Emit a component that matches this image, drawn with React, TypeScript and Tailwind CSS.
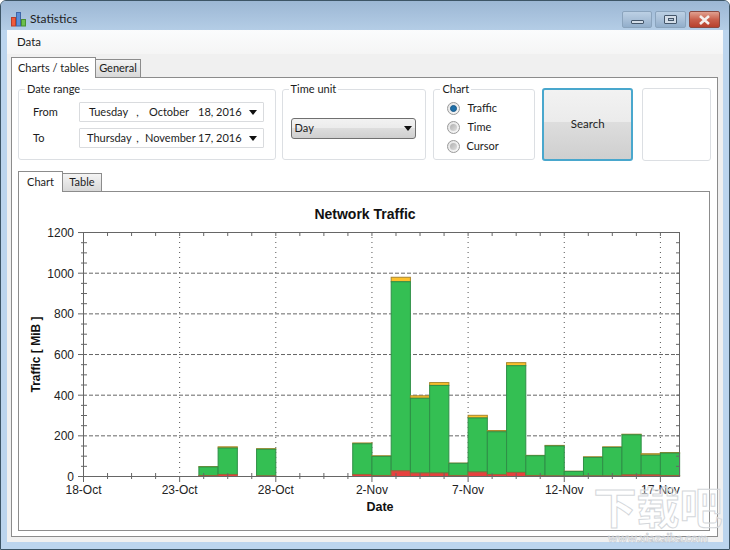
const uiFont = 'font-["Lato",sans-serif]';

// day offset from 18-Oct, red top, green top, yellow top (all in MB)
const bars: [number, number, number, number][] = [
  [6, 5, 47, 49],
  [7, 10, 140, 146],
  [9, 3, 134, 137],
  [14, 10, 161, 165],
  [15, 5, 99, 102],
  [16, 28, 958, 980],
  [17, 17, 385, 397],
  [18, 17, 448, 462],
  [19, 5, 65, 66],
  [20, 22, 288, 301],
  [21, 10, 220, 226],
  [22, 20, 545, 560],
  [23, 5, 102, 104],
  [24, 3, 150, 153],
  [25, 2, 25, 26],
  [26, 3, 94, 97],
  [27, 3, 143, 146],
  [28, 8, 205, 208],
  [29, 8, 105, 112],
  [30, 5, 115, 118],
];

const xLabels = ['18-Oct', '23-Oct', '28-Oct', '2-Nov', '7-Nov', '12-Nov', '17-Nov'];

const px = (day: number) => 83.5 + day * 19.23;
const py = (mb: number) => 476.5 - mb * 0.2033;

function TrafficChart() {
  const minorX = Array.from({ length: 25 }, (_, i) => px(i * 1.25));
  const minorY = Array.from({ length: 25 }, (_, i) => py(i * 50));
  return (
    <svg width="689" height="338" viewBox="19 192 689 338" className="block">
      <text x="365" y="219" textAnchor="middle" fontSize="14" fontWeight="700" fontFamily="Liberation Sans" fill="#111">
        Network Traffic
      </text>

      {[200, 400, 600, 800, 1000].map((v) => (
        <line key={v} x1="83" x2="680" y1={py(v)} y2={py(v)} stroke="#666" strokeDasharray="4 2" />
      ))}
      {[0, 5, 10, 15, 20, 25, 30].map((d) => (
        <line key={d} x1={px(d)} x2={px(d)} y1="232" y2="476" stroke="#555" strokeDasharray="1 4" />
      ))}

      {bars.map(([day, red, green, yellow]) => (
        <g key={day}>
          <rect x={px(day)} y={py(yellow)} width="19.23" height={py(green) - py(yellow)} fill="#fcc02c" stroke="#a8862c" />
          <rect x={px(day)} y={py(green)} width="19.23" height={py(red) - py(green)} fill="#34bf53" stroke="#2f8f47" />
          <rect x={px(day)} y={py(red)} width="19.23" height={py(0) - py(red)} fill="#e6413f" stroke="#96683a" />
        </g>
      ))}

      <rect x="83.5" y="232.5" width="596" height="244" fill="none" stroke="#666" />
      {minorY.map((y, i) => (
        <g key={i} stroke="#666">
          <line x1={i % 4 === 0 ? 78 : 81} x2={i % 4 === 0 ? 84 : 87} y1={y} y2={y} />
          <line x1="676" x2="680" y1={y} y2={y} />
        </g>
      ))}
      {minorX.map((x, i) => (
        <g key={i} stroke="#666">
          <line x1={x} x2={x} y1={i % 4 === 0 ? 476 : 473} y2={i % 4 === 0 ? 482 : 479} />
          <line x1={x} x2={x} y1="232" y2="236" />
        </g>
      ))}

      {[0, 200, 400, 600, 800, 1000, 1200].map((v) => (
        <text key={v} x="74" y={py(v) + 4.5} textAnchor="end" fontSize="12" fontFamily="Liberation Sans" fill="#222">
          {v}
        </text>
      ))}
      {xLabels.map((label, i) => (
        <text key={label} x={px(i * 5)} y="494" textAnchor="middle" fontSize="12" fontFamily="Liberation Sans" fill="#222">
          {label}
        </text>
      ))}
      <text x="380" y="511" textAnchor="middle" fontSize="12.5" fontWeight="700" fontFamily="Liberation Sans" fill="#111">
        Date
      </text>
      <text
        transform="translate(40 354.5) rotate(-90)"
        textAnchor="middle"
        fontSize="12"
        fontWeight="700"
        fontFamily="Liberation Sans"
        fill="#111"
      >
        Traffic [ MiB ]
      </text>
    </svg>
  );
}

function AppIcon() {
  return (
    <svg width="16" height="16" viewBox="0 0 16 16" className="block">
      <rect x="0.5" y="6.5" width="4" height="8.5" fill="#ef5a3c" stroke="#b8402c" />
      <rect x="5.5" y="1.5" width="4" height="13.5" fill="#5d8fd8" stroke="#3f67a8" />
      <rect x="10.5" y="8.5" width="4" height="6.5" fill="#6cc04c" stroke="#4a8f34" />
    </svg>
  );
}

function WindowButtons() {
  return (
    <div className="flex gap-[3px] pt-[10px] pr-[9px]">
      <div className="flex h-[17px] w-[30px] items-end justify-center rounded-[2px] border border-[#8ba4bd] bg-gradient-to-b from-[#bcd0e4] via-[#a9c0d8] to-[#92aecb] pb-[3px]">
        <div className="h-[4px] w-[13px] rounded-[1px] border border-[#44566a] bg-[#d3dde8]" />
      </div>
      <div className="flex h-[17px] w-[31px] items-center justify-center rounded-[2px] border border-[#8ba4bd] bg-gradient-to-b from-[#bcd0e4] via-[#a9c0d8] to-[#92aecb]">
        <div className="flex h-[9px] w-[13px] items-center justify-center rounded-[1px] border border-[#44566a] bg-[#d3dde8]">
          <div className="h-[3px] w-[6px] border border-[#44566a] bg-[#b8c9da]" />
        </div>
      </div>
      <div className="flex h-[17px] w-[31px] items-center justify-center rounded-[2px] border border-[#8a4a42] bg-gradient-to-b from-[#e0a090] via-[#c9604c] to-[#b8402c]">
        <svg width="13" height="10" viewBox="0 0 13 10">
          <path d="M2 1 L11 9 M11 1 L2 9" stroke="#f4f0ee" strokeWidth="2.6" />
        </svg>
      </div>
    </div>
  );
}

function Tab({ label, active, w }: { label: string; active?: boolean; w: string }) {
  if (active) {
    return (
      <div className={`relative z-10 -mb-px flex h-[21px] items-start border border-b-0 border-[#8c8c8c] bg-white pt-[2px] ${w}`}>
        <span className="w-full text-center">{label}</span>
      </div>
    );
  }
  return (
    <div className={`mt-[2px] flex h-[18px] items-center justify-center border border-l-0 border-b-0 border-[#8c8c8c] bg-gradient-to-b from-[#f4f4f4] to-[#d8d8d8] ${w}`}>
      {label}
    </div>
  );
}

function GroupBox({ title, className, children }: { title: string; className: string; children?: React.ReactNode }) {
  return (
    <fieldset className={`h-[78px] rounded-[3px] border border-[#dcdfe3] ${className}`}>
      <legend className="ml-[6px] px-[2px] leading-[14px]">{title}</legend>
      {children}
    </fieldset>
  );
}

function DateField({ day, month, date }: { day: string; month: string; date: string }) {
  return (
    <div className="flex h-[20px] w-[185px] items-center rounded-[1px] border border-[#d9dbde] bg-white">
      <div className="w-[50px] pl-[7px] text-center">{day}</div>
      <div className="w-[15px] text-center">,</div>
      <div className="w-[48px] text-center">{month}</div>
      <div className="ml-[5px] w-[44px] whitespace-nowrap">{date}</div>
      <ArrowDown className="ml-[7px]" />
    </div>
  );
}

function ArrowDown({ className }: { className?: string }) {
  return (
    <svg width="8" height="5" viewBox="0 0 8 5" className={className}>
      <path d="M0 0 H8 L4 5 Z" fill="#111" />
    </svg>
  );
}

function Radio({ label, checked, indent }: { label: string; checked?: boolean; indent: string }) {
  return (
    <div className="flex h-[19px] items-center">
      <div className="flex h-[13px] w-[13px] items-center justify-center rounded-full border border-[#9a9a9a] bg-gradient-to-br from-[#e4e4e4] to-[#f8f8f8]">
        {checked ? (
          <div className="h-[7px] w-[7px] rounded-full border border-[#1a5a8a] bg-[#1f6fa8]" />
        ) : (
          <div className="h-[7px] w-[7px] rounded-full bg-gradient-to-br from-[#b0b0b0] to-[#dedede]" />
        )}
      </div>
      <span className={indent}>{label}</span>
    </div>
  );
}

export default function App() {
  return (
    <div className={`relative h-[550px] w-[730px] overflow-hidden rounded-t-[6px] border border-[#3d5566] bg-[#bcd5ee] text-[11px] text-[#1c1c1c] ${uiFont}`}>
      <div className="flex h-[29px] items-start justify-between bg-gradient-to-b from-[#9cb7d4] to-[#b4cde6]">
        <div className="flex items-center gap-[3px] pt-[10px] pl-[10px]">
          <AppIcon />
          <span className="text-[12px] leading-[14px]">Statistics</span>
        </div>
        <WindowButtons />
      </div>

      <div className="mx-[6px] h-[512px] bg-[#f0f0f0]">
        <div className="flex h-[24px] items-center bg-gradient-to-b from-[#fbfcfd] to-[#f5f5f5] pl-[10px] text-[11.5px]">Data</div>

        <div className="px-[4px] pt-[3px]">
          <div className="flex">
            <Tab label="Charts / tables" active w="w-[85px]" />
            <Tab label="General" w="w-[45px]" />
          </div>

          <div className="h-[460px] w-[707px] border border-[#8c8c8c] bg-white px-[6px]">
            <div className="flex items-start pt-[4px]">
              <GroupBox title="Date range" className="w-[258px]">
                <div className="mt-[6px] flex flex-col gap-[6px]">
                  <div className="flex items-center">
                    <span className="w-[60px] pl-[14px]">From</span>
                    <DateField day="Tuesday" month="October" date="18, 2016" />
                  </div>
                  <div className="flex items-center">
                    <span className="w-[60px] pl-[14px]">To</span>
                    <DateField day="Thursday" month="November" date="17, 2016" />
                  </div>
                </div>
              </GroupBox>

              <GroupBox title="Time unit" className="ml-[6px] w-[145px]">
                <div className="mt-[22px] ml-[8px] flex h-[21px] w-[125px] items-center justify-between rounded-[3px] border border-[#707070] bg-[linear-gradient(#f2f2f2,#ebebeb_50%,#dddddd_50%,#cfcfcf)] px-[3px]">
                  <span>Day</span>
                  <ArrowDown />
                </div>
              </GroupBox>

              <GroupBox title="Chart" className="ml-[7px] w-[102px]">
                <div className="mt-[3px] flex flex-col pl-[13px]">
                  <Radio label="Traffic" checked indent="ml-[7px]" />
                  <Radio label="Time" indent="ml-[7px]" />
                  <Radio label="Cursor" indent="ml-[6px]" />
                </div>
              </GroupBox>

              <div className="mt-[6px] ml-[7px] flex h-[73px] w-[91px] items-center justify-center rounded-[3px] border-2 border-[#49a7cd] bg-[linear-gradient(#f2f2f2,#ebebeb_47%,#dddddd_47%,#cfcfcf)] pb-[1px] text-[11.5px]">
                Search
              </div>

              <div className="mt-[6px] ml-[9px] h-[73px] w-[69px] rounded-[3px] border border-[#dcdfe3]" />
            </div>

            <div className="mt-[10px] flex">
              <Tab label="Chart" active w="w-[45px]" />
              <Tab label="Table" w="w-[39px]" />
            </div>

            <div className="h-[340px] w-[692px] border border-[#8c8c8c] bg-white">
              <TrafficChart />
            </div>
          </div>
        </div>
      </div>

      <div className="pointer-events-none absolute top-[476px] left-[590px] flex w-[134px] flex-col items-center">
        <span className='font-["Noto_Sans_CJK_SC",sans-serif] text-[43px] leading-[56px] font-bold whitespace-nowrap text-white/30 [-webkit-text-stroke:1px_#d4d7db]'>
          下载吧
        </span>
        <span className="-mt-[2px] text-[12px] leading-[13px] font-bold whitespace-nowrap text-white/50 [-webkit-text-stroke:0.5px_#b4bbc4]">www.xiazaiba.com</span>
      </div>
    </div>
  );
}
